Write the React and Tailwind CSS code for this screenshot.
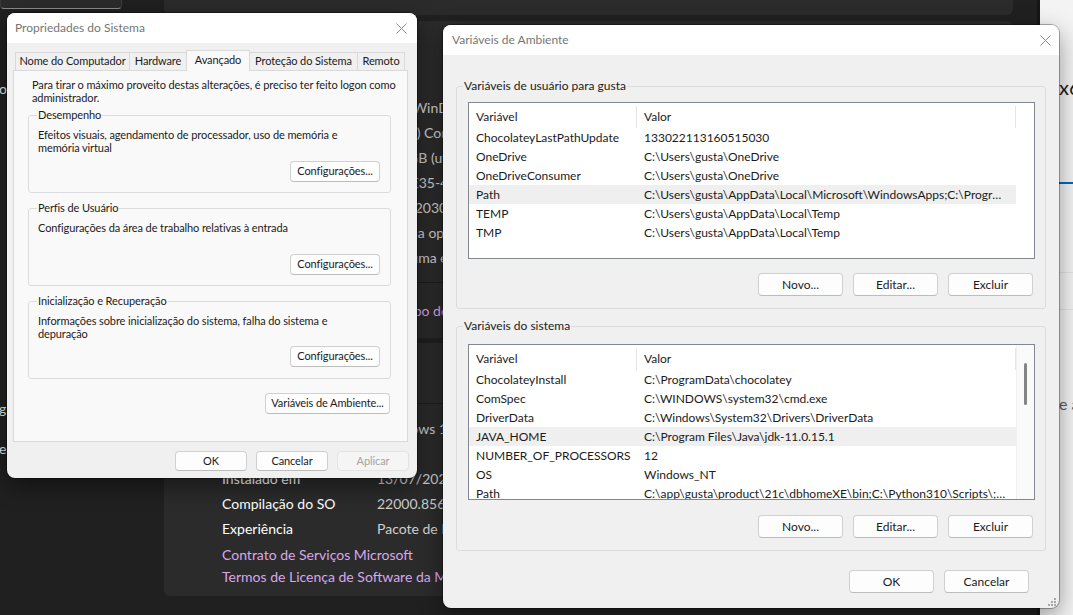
import React from "react";

const userVars = [
  ["ChocolateyLastPathUpdate", "133022113160515030"],
  ["OneDrive", "C:\\Users\\gusta\\OneDrive"],
  ["OneDriveConsumer", "C:\\Users\\gusta\\OneDrive"],
  ["Path", "C:\\Users\\gusta\\AppData\\Local\\Microsoft\\WindowsApps;C:\\Program Files\\nodejs"],
  ["TEMP", "C:\\Users\\gusta\\AppData\\Local\\Temp"],
  ["TMP", "C:\\Users\\gusta\\AppData\\Local\\Temp"],
];

const sysVars = [
  ["ChocolateyInstall", "C:\\ProgramData\\chocolatey"],
  ["ComSpec", "C:\\WINDOWS\\system32\\cmd.exe"],
  ["DriverData", "C:\\Windows\\System32\\Drivers\\DriverData"],
  ["JAVA_HOME", "C:\\Program Files\\Java\\jdk-11.0.15.1"],
  ["NUMBER_OF_PROCESSORS", "12"],
  ["OS", "Windows_NT"],
  ["Path", "C:\\app\\gusta\\product\\21c\\dbhomeXE\\bin;C:\\Python310\\Scripts\\;C:\\Python310"],
];

const deviceSpecs = [
  ["Nome do dispositivo", "GUSSWinDesktop"],
  ["Processador", "Intel(R) Core(TM) i7-10750H CPU @ 2.60GHz   2.59 GHz"],
  ["RAM instalada", "16,0 GB (utilizável: 15,8 GB)"],
  ["ID do dispositivo", "A1F6E35-4C2B-4F19-9D7E-3B5A0C7D1E42"],
  ["ID do Produto", "0342-20302-18877-AAOEM"],
  ["Tipo de sistema", "Sistema operacional de 64 bits, processador baseado em x64"],
  ["Caneta e toque", "Nenhuma entrada à caneta ou por toque disponível para este vídeo"],
];

const winSpecs = [
  ["Edição", "Windows 11 Home"],
  ["Versão", "21H2"],
  ["Instalado em", "13/07/2022"],
  ["Compilação do SO", "22000.856"],
  ["Experiência", "Pacote de Experiência de Recursos do Windows 1000.22000.856.0"],
];

function CloseX() {
  return (
    <svg width="11" height="11" viewBox="0 0 11 11">
      <path d="M0.5 0.5L10.5 10.5M10.5 0.5L0.5 10.5" stroke="#8b8b8b" strokeWidth="1" />
    </svg>
  );
}

function Btn({ children, className = "", disabled = false }) {
  return (
    <div
      className={`flex items-center justify-center whitespace-nowrap rounded-[4px] border shrink-0 ${
        disabled
          ? "border-[#e3e3e3] bg-[#f5f5f5] text-[#a3a3a3]"
          : "border-[#d0d0d0] border-b-[#bcbcbc] bg-[#fdfdfd] text-[#1b1b1b]"
      } ${className}`}
    >
      {children}
    </div>
  );
}

function SpecRow({ label, value }) {
  return (
    <div className="flex h-[25px] items-center whitespace-nowrap">
      <div className="w-[211px] shrink-0 pl-[58px] text-white">{label}</div>
      <div className="pl-[2px] text-[#cfcfcf]">{value}</div>
    </div>
  );
}

function VarList({ rows, selected, height, scroll = false }) {
  return (
    <div className={`flex border border-[#828790] bg-white overflow-hidden ${height}`}>
      <div className="w-[547px] shrink-0 flex flex-col">
        <div className="flex h-[25px] items-end shrink-0">
          <div className="w-[168px] h-[22px] border-r border-[#e5e5e5] flex items-center pl-[7px]">Variável</div>
          <div className="w-[379px] h-[22px] border-r border-[#e5e5e5] flex items-center pl-[7px]">Valor</div>
        </div>
        {rows.map(([k, v]) => (
          <div
            key={k}
            className={`flex h-[19px] shrink-0 items-center whitespace-nowrap leading-[16px] ${k === selected ? "bg-[#efefef]" : ""}`}
          >
            <div className="w-[168px] shrink-0 pl-[7px] overflow-hidden">{k}</div>
            <div className="w-[379px] shrink-0 pl-[7px] pr-[9px] truncate">{v}</div>
          </div>
        ))}
      </div>
      {scroll && (
        <div className="flex-1 border-l border-[#f0f0f0] bg-[#fafafa] flex justify-center">
          <div className="mt-[18px] w-[3px] h-[42px] rounded-full bg-[#858585]" />
        </div>
      )}
    </div>
  );
}

function SettingsBackground() {
  return (
    <>
      {/* left nav fragments */}
      <div className="absolute left-0 top-0 w-[164px] h-full flex flex-col text-[14px] leading-[20px] text-[#e8e8e8]">
        <div className="w-[122px] h-[10px] -mt-px rounded-b-[4px] border border-[#3a3a3a] border-b-[#8d8d8d] bg-[#2c2c2c]" />
        <div className="mt-[70px] -ml-[1px]">o</div>
        <div className="mt-[300px] -ml-[1px]">g</div>
        <div className="mt-[20px] -ml-[1px]">e</div>
      </div>

      {/* Sobre page cards */}
      <div className="absolute left-[164px] top-[-20px] w-[849px] flex flex-col text-[14px]">
        <div className="h-[35px] rounded-b-[6px] bg-[#2b2b2b]" />
        <div className="mt-[6px] rounded-[6px] bg-[#2b2b2b] flex flex-col">
          <div className="h-[74px] flex items-center pl-[58px] text-white">Especificações do dispositivo</div>
          {deviceSpecs.map(([l, v]) => (
            <SpecRow key={l} label={l} value={v} />
          ))}
          <div className="h-[12px]" />
          <div className="h-[56px] border-t border-[#1d1d1d] flex items-center gap-[24px] pl-[18px] whitespace-nowrap">
            <span className="text-white">Links relacionados</span>
            <span className="text-[#d8a7ea]">Domínio ou grupo de trabalho</span>
            <span className="text-[#d8a7ea]">Proteção do sistema</span>
            <span className="text-[#d8a7ea]">Configurações avançadas do sistema</span>
          </div>
        </div>
        <div className="mt-[5px] rounded-[6px] bg-[#2b2b2b] flex flex-col">
          <div className="h-[60px] flex items-center pl-[58px] text-white">Especificações do Windows</div>
          <div className="border-t border-[#1d1d1d] pt-[12px] flex flex-col">
            {winSpecs.map(([l, v]) => (
              <SpecRow key={l} label={l} value={v} />
            ))}
            <div className="mt-[2px] h-[22px] flex items-center pl-[58px] text-[#d8a7ea]">Contrato de Serviços Microsoft</div>
            <div className="h-[22px] flex items-center pl-[58px] text-[#d8a7ea] whitespace-nowrap">
              Termos de Licença de Software da Microsoft
            </div>
            <div className="h-[9px]" />
          </div>
        </div>
      </div>

      {/* light window on the right */}
      <div className="absolute left-[1037px] top-0 w-[36px] h-full border-l-[3px] border-[#161616] bg-[#f3f3f3] flex flex-col overflow-hidden">
        <div className="mt-[74px] pl-[19px] text-[20px] leading-[26px] text-[#1a1a1a] whitespace-nowrap">x64</div>
        <div className="mt-[82px] h-[2px] bg-[#0067c0]" />
        <div className="mt-[88px] h-px bg-[#e3e3e3]" />
        <div className="mt-[36px] h-px bg-[#e3e3e3]" />
        <div className="mt-[84px] pl-[19px] text-[16px] leading-[20px] text-[#5c5c5c] whitespace-nowrap">e a</div>
      </div>
    </>
  );
}

function Group({ title, className = "", legendMl = "-ml-[1px]", children }) {
  return (
    <fieldset className={`border border-[#dcdcdc] rounded-[3px] ${className}`}>
      <legend className={`${legendMl} px-[1px] leading-[16px] text-[#1b1b1b]`}>{title}</legend>
      {children}
    </fieldset>
  );
}

function SystemProperties() {
  const tabs = [
    ["Nome do Computador", "w-[115px]"],
    ["Hardware", "w-[58px]"],
    ["Avançado", "w-[64px]"],
    ["Proteção do Sistema", "w-[109px]"],
    ["Remoto", "w-[48px]"],
  ];
  return (
    <div className="absolute left-[7px] top-[13px] w-[410px] h-[465px] rounded-[8px] bg-[#f0f0f0] overflow-hidden flex flex-col text-[11px] tracking-[-0.1px] text-[#1b1b1b] shadow-[0_0_0_1px_rgba(0,0,0,0.35),0_8px_24px_rgba(0,0,0,0.45)]">
      <div className="h-[30px] shrink-0 bg-white flex items-center justify-between pl-[8px] pr-[10px]">
        <span className="text-[12px] tracking-normal text-[#767676]">Propriedades do Sistema</span>
        <CloseX />
      </div>
      <div className="flex flex-col pl-[6px] pr-[9px]">
        <div className="flex items-end h-[27px] pl-[2px] whitespace-nowrap">
          {tabs.map(([t, w], i) =>
            t === "Avançado" ? (
              <div
                key={t}
                className={`${w} shrink-0 relative z-10 -ml-px -mb-px h-[21px] pb-[2px] border border-b-0 border-[#d9d9d9] bg-[#f9f9f9] flex items-center justify-center`}
              >
                {t}
              </div>
            ) : (
              <div
                key={t}
                className={`${w} shrink-0 ${i > 0 ? "-ml-px" : ""} h-[18px] border border-b-0 border-[#d9d9d9] bg-[#f0f0f0] flex items-center justify-center`}
              >
                {t}
              </div>
            )
          )}
        </div>
        <div className="h-[372px] border border-[#d9d9d9] bg-[#f9f9f9] flex flex-col pl-[14px] pr-[16px] pt-[7px]">
          <div className="ml-[4px] leading-[13px] whitespace-nowrap">
            Para tirar o máximo proveito destas alterações, é preciso ter feito logon como
            <br />
            administrador.
          </div>
          <div className="mt-[3px] flex flex-col gap-[7px]">
            <Group title="Desempenho" className="h-[86px] flex flex-col pl-[9px] pr-[10px] pt-[5px]">
              <div className="leading-[13px] whitespace-nowrap">
                Efeitos visuais, agendamento de processador, uso de memória e
                <br />
                memória virtual
              </div>
              <Btn className="mt-[7px] self-end w-[90px] h-[21px]">Configurações...</Btn>
            </Group>
            <Group title="Perfis de Usuário" className="h-[86px] flex flex-col pl-[9px] pr-[10px] pt-[5px]">
              <div className="leading-[13px] whitespace-nowrap">Configurações da área de trabalho relativas à entrada</div>
              <Btn className="mt-[20px] self-end w-[90px] h-[21px]">Configurações...</Btn>
            </Group>
            <Group title="Inicialização e Recuperação" className="h-[86px] flex flex-col pl-[9px] pr-[10px] pt-[5px]">
              <div className="leading-[13px] whitespace-nowrap">
                Informações sobre inicialização do sistema, falha do sistema e
                <br />
                depuração
              </div>
              <Btn className="mt-[6px] self-end w-[90px] h-[21px]">Configurações...</Btn>
            </Group>
          </div>
          <Btn className="mt-[14px] self-end mr-[1px] w-[125px] h-[21px]">Variáveis de Ambiente...</Btn>
        </div>
        <div className="flex justify-end gap-[9px] mt-[9px] -mr-px">
          <Btn className="w-[72px] h-[20px]">OK</Btn>
          <Btn className="w-[72px] h-[20px]">Cancelar</Btn>
          <Btn disabled className="w-[72px] h-[20px]">Aplicar</Btn>
        </div>
      </div>
    </div>
  );
}

function EnvironmentVariables() {
  return (
    <div className="absolute left-[443px] top-[25px] w-[616px] h-[583px] rounded-[8px] bg-[#f0f0f0] overflow-hidden flex flex-col text-[12px] text-[#1b1b1b] shadow-[0_0_0_1px_rgba(0,0,0,0.3),0_8px_24px_rgba(0,0,0,0.4)]">
      <div className="h-[30px] shrink-0 bg-white flex items-center justify-between pl-[9px] pr-[8px]">
        <span className="text-[#767676]">Variáveis de Ambiente</span>
        <CloseX />
      </div>
      <div className="flex flex-col px-[13px]">
        <Group
          title="Variáveis de usuário para gusta"
          legendMl="-ml-[5px]"
          className="mt-[23px] h-[231px] flex flex-col pl-[11px] pr-[10px] pt-[8px]"
        >
          <VarList rows={userVars} selected="Path" height="h-[157px]" />
          <div className="mt-[14px] flex justify-end gap-[10px] pr-[2px]">
            <Btn className="w-[85px] h-[23px]">Novo...</Btn>
            <Btn className="w-[85px] h-[23px]">Editar...</Btn>
            <Btn className="w-[85px] h-[23px]">Excluir</Btn>
          </div>
        </Group>
        <Group
          title="Variáveis do sistema"
          legendMl="-ml-[5px]"
          className="mt-[9px] h-[233px] flex flex-col pl-[11px] pr-[10px] pt-[10px]"
        >
          <VarList rows={sysVars} selected="JAVA_HOME" height="h-[156px]" scroll />
          <div className="mt-[15px] flex justify-end gap-[10px] pr-[2px]">
            <Btn className="w-[85px] h-[23px]">Novo...</Btn>
            <Btn className="w-[85px] h-[23px]">Editar...</Btn>
            <Btn className="w-[85px] h-[23px]">Excluir</Btn>
          </div>
        </Group>
        <div className="mt-[19px] flex justify-end gap-[10px] mr-[17px]">
          <Btn className="w-[85px] h-[23px]">OK</Btn>
          <Btn className="w-[85px] h-[23px]">Cancelar</Btn>
        </div>
      </div>
      <svg className="absolute right-[3px] bottom-[2px]" width="8" height="8" viewBox="0 0 8 8">
        <g fill="#a8a8a8">
          <rect x="6" y="0" width="2" height="2" />
          <rect x="3" y="3" width="2" height="2" />
          <rect x="6" y="3" width="2" height="2" />
          <rect x="0" y="6" width="2" height="2" />
          <rect x="3" y="6" width="2" height="2" />
          <rect x="6" y="6" width="2" height="2" />
        </g>
      </svg>
    </div>
  );
}

export default function App() {
  return (
    <div className="relative w-[1073px] h-[615px] overflow-hidden bg-[#202020] font-['Lato',sans-serif]">
      <SettingsBackground />
      <SystemProperties />
      <EnvironmentVariables />
    </div>
  );
}
